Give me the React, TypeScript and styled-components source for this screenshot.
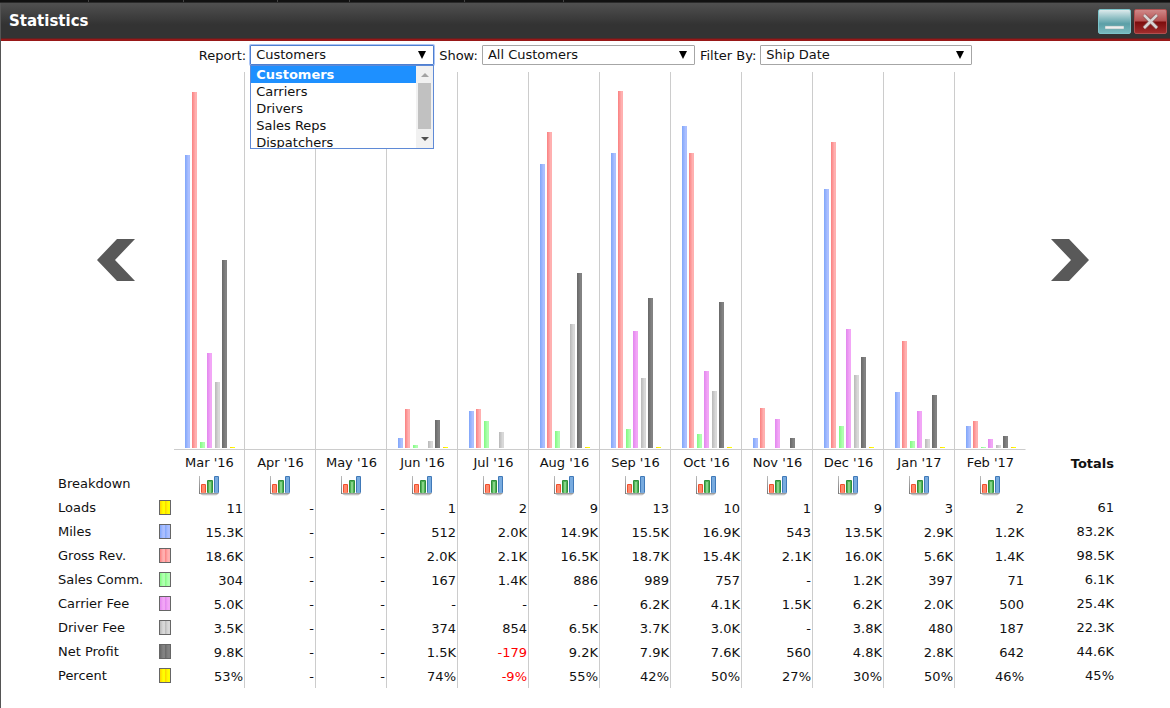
import React from "react";
import styled, { createGlobalStyle } from "styled-components";

const GlobalStyle = createGlobalStyle`
  * { box-sizing: border-box; }
  body {
    margin: 0;
    background: #fff;
    color: #111;
    font-family: "DejaVu Sans", Verdana, sans-serif;
    font-size: 13px;
  }
  button { border: 0; padding: 0; background: none; font: inherit; cursor: pointer; }
  svg { display: block; }
`;

type Tone = { from: string; to: string };

const series: { label: string; tone: Tone }[] = [
  { label: "Loads", tone: { from: "#ffd000", to: "#ffff00" } },
  { label: "Miles", tone: { from: "#80a6fa", to: "#abbfff" } },
  { label: "Gross Rev.", tone: { from: "#fa8080", to: "#ffb0b0" } },
  { label: "Sales Comm.", tone: { from: "#80fa80", to: "#b0ffb0" } },
  { label: "Carrier Fee", tone: { from: "#e286ee", to: "#f2a6f6" } },
  { label: "Driver Fee", tone: { from: "#b8b8b8", to: "#d8d8d8" } },
  { label: "Net Profit", tone: { from: "#686868", to: "#828282" } },
  { label: "Percent", tone: { from: "#ffd000", to: "#ffff00" } },
];

const months: { name: string; bars: number[]; values: string[] }[] = [
  { name: "Mar '16", bars: [293, 356, 6, 95, 66, 188, 1], values: ["11", "15.3K", "18.6K", "304", "5.0K", "3.5K", "9.8K", "53%"] },
  { name: "Apr '16", bars: [], values: ["-", "-", "-", "-", "-", "-", "-", "-"] },
  { name: "May '16", bars: [], values: ["-", "-", "-", "-", "-", "-", "-", "-"] },
  { name: "Jun '16", bars: [10, 39, 3, 0, 7, 28, 1], values: ["1", "512", "2.0K", "167", "-", "374", "1.5K", "74%"] },
  { name: "Jul '16", bars: [37, 39, 27, 0, 16, 0, 0], values: ["2", "2.0K", "2.1K", "1.4K", "-", "854", "-179", "-9%"] },
  { name: "Aug '16", bars: [284, 316, 17, 0, 124, 175, 1], values: ["9", "14.9K", "16.5K", "886", "-", "6.5K", "9.2K", "55%"] },
  { name: "Sep '16", bars: [295, 357, 19, 117, 70, 150, 1], values: ["13", "15.5K", "18.7K", "989", "6.2K", "3.7K", "7.9K", "42%"] },
  { name: "Oct '16", bars: [322, 295, 14, 77, 57, 146, 1], values: ["10", "16.9K", "15.4K", "757", "4.1K", "3.0K", "7.6K", "50%"] },
  { name: "Nov '16", bars: [10, 40, 0, 29, 0, 10, 0], values: ["1", "543", "2.1K", "-", "1.5K", "-", "560", "27%"] },
  { name: "Dec '16", bars: [259, 306, 22, 119, 73, 91, 1], values: ["9", "13.5K", "16.0K", "1.2K", "6.2K", "3.8K", "4.8K", "30%"] },
  { name: "Jan '17", bars: [56, 107, 7, 37, 9, 53, 1], values: ["3", "2.9K", "5.6K", "397", "2.0K", "480", "2.8K", "50%"] },
  { name: "Feb '17", bars: [22, 27, 1, 9, 3, 12, 1], values: ["2", "1.2K", "1.4K", "71", "500", "187", "642", "46%"] },
];

const totals = ["61", "83.2K", "98.5K", "6.1K", "25.4K", "22.3K", "44.6K", "45%"];

const tabEdges = [88, 183, 277, 349, 464, 563];

const Backdrop = styled.div`
  height: 3px;
  border-bottom: 1px solid #2a2a2a;
  background: linear-gradient(
    90deg,
    ${tabEdges.map((x) => `#111 ${x}px, #444 ${x}px ${x + 1}px, #111 ${x + 1}px`).join(", ")}
  );
`;

const Window = styled.main`
  min-height: calc(100vh - 3px);
  border-left: 1px solid #555;
`;

const TitleBar = styled.header`
  display: flex;
  align-items: center;
  gap: 3px;
  height: 38px;
  padding: 0 3px 0 8px;
  border-bottom: 2px solid #981818;
  box-shadow: inset 0 -1px #5c2424;
  background: linear-gradient(#505050, #333 60%, #333);
`;

const Title = styled.h1`
  flex: 1;
  margin: 0;
  color: #fff;
  font-size: 15px;
  line-height: 18px;
`;

const WindowButton = styled.button<{ $kind: "minimize" | "close" }>`
  display: grid;
  place-items: center;
  width: 33px;
  height: 25px;
  border: 1px solid ${(p) => (p.$kind === "close" ? "#b05050" : "#7cc4ca")};
  border-radius: 2px;
  background: ${(p) =>
    p.$kind === "close"
      ? "linear-gradient(#cf8888, #b45050 48%, #7c0c0c 52%, #a02c2c)"
      : "linear-gradient(#dceaec, #8fbfc4 35%, #5b9fa7 60%, #78b9be)"};
`;

const Filters = styled.form`
  display: flex;
  justify-content: center;
  gap: 5px;
  padding: 4px 0 7px;
  line-height: 21px;
`;

const Field = styled.div`
  display: flex;
  gap: 4px;
  height: 20px;
`;

const SelectBox = styled.div<{ $width: number }>`
  position: relative;
  width: ${(p) => p.$width}px;
`;

const Select = styled.select<{ $open?: boolean }>`
  display: block;
  appearance: none;
  width: 100%;
  height: 20px;
  padding: 0 5px;
  border: 1px solid ${(p) => (p.$open ? "#4f7fd0" : "#a6a6a6")};
  border-radius: 1px;
  outline: 0;
  box-shadow: ${(p) => (p.$open ? "0 0 0 1px #a9c4f5" : "none")};
  background: #fff;
  color: #111;
  font: inherit;
  line-height: 18px;
`;

const SelectArrow = styled.svg`
  position: absolute;
  top: 6px;
  right: 8px;
  pointer-events: none;
`;

const Menu = styled.div`
  position: absolute;
  z-index: 2;
  top: 20px;
  left: 0;
  display: flex;
  width: 100%;
  height: 84px;
  border: 1px solid #5f8ad6;
  background: #fff;
`;

const Options = styled.ul`
  flex: 1;
  margin: 0;
  padding: 0;
  overflow: hidden;
  list-style: none;
`;

const Option = styled.li<{ $active?: boolean }>`
  padding: 0 5px;
  line-height: 17px;
  color: ${(p) => (p.$active ? "#fff" : "#111")};
  font-weight: ${(p) => (p.$active ? "bold" : "normal")};
  background: ${(p) => (p.$active ? "#1e90ff" : "transparent")};
`;

const ScrollTrack = styled.div`
  display: flex;
  flex-direction: column;
  align-items: center;
  justify-content: space-between;
  width: 17px;
  padding: 7px 2px;
  background: #f1f1f1;
`;

const ScrollThumb = styled.div`
  width: 13px;
  height: 46px;
  margin-bottom: 3px;
  background: #c1c1c1;
`;

const Panel = styled.section`
  padding: 0 56px 0 57px;
`;

const Table = styled.table`
  width: 100%;
  table-layout: fixed;
  border-collapse: separate;
  border-spacing: 0;
  line-height: 24px;

  th, td { padding: 0; font-weight: normal; }
`;

const LabelCol = styled.col` width: 101px; `;
const SwatchCol = styled.col` width: 15px; `;
const TotalCol = styled.col` width: 88px; `;

const ArrowCell = styled.td<{ $inset: number }>`
  && { padding: 0 0 2px ${(p) => p.$inset}px; }
`;

const MonthCell = styled.td`
  border-right: 1px solid #ccc;
  text-align: center;
  &:nth-last-child(2) { border-right-color: transparent; }
`;

const MonthHead = styled(MonthCell)`
  && { padding: 2px 0 0 1px; }
  line-height: 22px;
`;

const ChartCell = styled(MonthCell)`
  border-bottom: 1px solid #ccc;
`;

const Bars = styled.div`
  display: flex;
  align-items: flex-end;
  justify-content: center;
  gap: 2px;
  height: 377px;
  padding: 0 0 1px 2px;
`;

const Bar = styled.div<{ $tone: Tone }>`
  width: 5px;
  background: linear-gradient(90deg, ${(p) => p.$tone.from}, ${(p) => p.$tone.to} 70%);
  &:nth-child(odd):not(:first-child) { margin-left: 1px; }
`;

const ValueCell = styled(MonthCell)<{ $negative: boolean }>`
  && { padding: 1px 1px 0 0; }
  height: 24px;
  line-height: 23px;
  text-align: right;
  color: ${(p) => (p.$negative ? "#f00" : "inherit")};
`;

const RowLabel = styled.th`
  line-height: 24px;
  text-align: left;
  vertical-align: top;
`;

const BreakdownLabel = styled(RowLabel)`
  line-height: 20px;
`;

const TotalHead = styled.th`
  text-align: right;
  && { padding-top: 4px; font-weight: bold; }
  line-height: 20px;
`;

const TotalCell = styled.td`
  text-align: right;
  vertical-align: top;
  line-height: 24px;
`;

const SwatchCell = styled.td`
  && { padding-top: 4px; }
  vertical-align: top;
`;

const Swatch = styled.div<{ $tone: Tone }>`
  width: 12px;
  height: 15px;
  border: 1px solid #666;
  background: repeating-linear-gradient(90deg, ${(p) => p.$tone.from} 0, ${(p) => p.$tone.to} 3px, ${(p) => p.$tone.to} 5px);
`;

const IconButton = styled.button`
  display: block;
  margin: 2px auto 0;
`;

const Pager = styled.button` display: block; `;

function ChartIcon() {
  return (
    <svg width="20" height="20" viewBox="0 0 20 20" aria-hidden="true">
      <defs>
        <linearGradient id="axis" x1="0" y1="0" x2="0" y2="1">
          <stop offset="0" stopColor="#bbb" />
          <stop offset="1" stopColor="#777" />
        </linearGradient>
        <linearGradient id="shade" x1="0" y1="0" x2="0" y2="1">
          <stop offset="0" stopColor="#888" />
          <stop offset="1" stopColor="#888" stopOpacity="0" />
        </linearGradient>
      </defs>
      <rect x="0" y="0" width="1" height="18" fill="url(#axis)" />
      <path d="M0 17H20L17 20H4Z" fill="url(#shade)" />
      <rect x="2" y="8" width="5" height="9" rx="1" fill="#f0502e" />
      <rect x="3" y="9" width="3" height="8" fill="#ff8a6c" />
      <rect x="8" y="4" width="6" height="13" rx="1" fill="#2f8f3a" />
      <rect x="9" y="5" width="4" height="12" fill="#4fb055" />
      <rect x="10" y="6" width="2" height="11" fill="#86d488" />
      <rect x="15" y="0" width="5" height="17" rx="1" fill="#4079b8" />
      <rect x="16" y="1" width="3" height="16" fill="#78abdf" />
    </svg>
  );
}

function Dropdown(props: {
  id: string;
  label: string;
  width: number;
  options: string[];
  open?: boolean;
}) {
  return (
    <Field>
      <label htmlFor={props.id}>{props.label}</label>
      <SelectBox $width={props.width}>
        <Select id={props.id} $open={props.open}>
          {props.options.map((o) => (
            <option key={o}>{o}</option>
          ))}
        </Select>
        <SelectArrow width="8" height="8" viewBox="0 0 8 8">
          <path d="M0 0H8L4 8Z" fill="#000" />
        </SelectArrow>
        {props.open && (
          <Menu>
            <Options role="listbox" aria-label={props.label}>
              {props.options.map((o, i) => (
                <Option key={o} role="option" aria-selected={i === 0} $active={i === 0}>
                  {o}
                </Option>
              ))}
            </Options>
            <ScrollTrack>
              <svg width="8" height="4" viewBox="0 0 8 4"><path d="M0 4L4 0L8 4Z" fill="#a3a3a3" /></svg>
              <ScrollThumb />
              <svg width="8" height="4" viewBox="0 0 8 4"><path d="M0 0L4 4L8 0Z" fill="#505050" /></svg>
            </ScrollTrack>
          </Menu>
        )}
      </SelectBox>
    </Field>
  );
}

export default function App() {
  return (
    <>
      <GlobalStyle />
      <Backdrop />
      <Window>
        <TitleBar>
          <Title>Statistics</Title>
          <WindowButton $kind="minimize" aria-label="Minimize">
            <svg width="19" height="19" viewBox="0 0 19 19"><path d="M0 14H19V17H0Z" fill="#eee" stroke="#8aa" strokeWidth="0.5" /></svg>
          </WindowButton>
          <WindowButton $kind="close" aria-label="Close">
            <svg width="17" height="17" viewBox="0 0 17 17">
              <path d="M2 2L15 15M15 2L2 15" stroke="#8a5555" strokeWidth="4" />
              <path d="M2 2L15 15M15 2L2 15" stroke="#d8d4d4" strokeWidth="2.500" />
            </svg>
          </WindowButton>
        </TitleBar>
        <Filters>
          <Dropdown id="report" label="Report:" width={184} open options={["Customers", "Carriers", "Drivers", "Sales Reps", "Dispatchers"]} />
          <Dropdown id="show" label="Show:" width={213} options={["All Customers"]} />
          <Dropdown id="filter" label="Filter By:" width={212} options={["Ship Date"]} />
        </Filters>
        <Panel>
          <Table>
            <colgroup>
              <LabelCol />
              <SwatchCol />
              {months.map((m) => <col key={m.name} />)}
              <TotalCol />
            </colgroup>
            <tbody>
              <tr>
                <ArrowCell colSpan={2} $inset={39}>
                  <Pager aria-label="Earlier months">
                    <svg width="38" height="42" viewBox="0 0 38 42"><path d="M0 21L20 0H38L18 21L38 42H20Z" fill="#595959" /></svg>
                  </Pager>
                </ArrowCell>
                {months.map((m) => (
                  <ChartCell key={m.name}>
                    <Bars>
                      {m.bars.map((h, i) => (
                        <Bar key={i} $tone={series[i + 1].tone} style={{ height: h }} />
                      ))}
                    </Bars>
                  </ChartCell>
                ))}
                <ArrowCell $inset={25}>
                  <Pager aria-label="Later months">
                    <svg width="38" height="42" viewBox="0 0 38 42"><path d="M38 21L18 0H0L20 21L0 42H18Z" fill="#595959" /></svg>
                  </Pager>
                </ArrowCell>
              </tr>
              <tr>
                <td colSpan={2} />
                {months.map((m) => <MonthHead key={m.name} as="th" scope="col">{m.name}</MonthHead>)}
                <TotalHead scope="col">Totals</TotalHead>
              </tr>
              <tr>
                <BreakdownLabel scope="row" colSpan={2}>Breakdown</BreakdownLabel>
                {months.map((m) => (
                  <MonthCell key={m.name}>
                    <IconButton aria-label={`Breakdown for ${m.name}`}><ChartIcon /></IconButton>
                  </MonthCell>
                ))}
                <td />
              </tr>
              {series.map((s, row) => (
                <tr key={s.label}>
                  <RowLabel scope="row">{s.label}</RowLabel>
                  <SwatchCell><Swatch $tone={s.tone} /></SwatchCell>
                  {months.map((m) => (
                    <ValueCell key={m.name} $negative={/^-\d/.test(m.values[row])}>{m.values[row]}</ValueCell>
                  ))}
                  <TotalCell>{totals[row]}</TotalCell>
                </tr>
              ))}
            </tbody>
          </Table>
        </Panel>
      </Window>
    </>
  );
}
